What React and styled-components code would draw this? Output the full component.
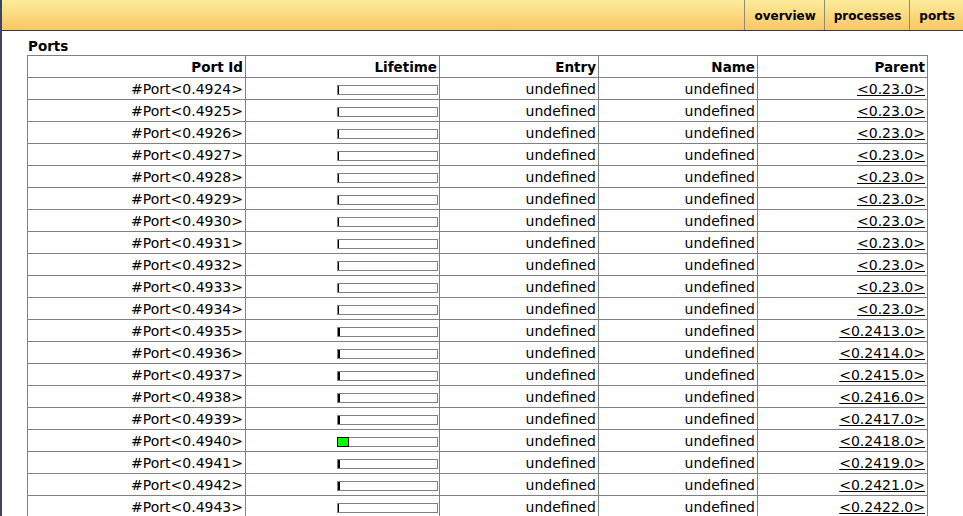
import React from "react";
import styled, { createGlobalStyle } from "styled-components";

const GlobalStyle = createGlobalStyle`
  html, body {
    margin: 0;
    padding: 0;
    overflow: hidden;
    background: #fff;
  }
  body {
    font-family: "DejaVu Sans", Verdana, sans-serif;
    color: #000;
  }
`;

const Page = styled.div`
  min-height: 100vh;
  border-left: 2px solid #3c4566;
  box-sizing: border-box;
`;

const TopBar = styled.div`
  display: flex;
  justify-content: flex-end;
  height: 30px;
  background: linear-gradient(to bottom, #fdeb9c, #f9c862);
  border-bottom: 1px solid #3a3a3a;
`;

const Tab = styled.a`
  display: flex;
  align-items: center;
  padding: 1px 8px 0 9px;
  border-left: 1px solid #8d8a7c;
  font-size: 12px;
  font-weight: bold;
  color: #000;
  text-decoration: none;
`;

const Content = styled.div`
  padding: 7px 0 0 25px;
`;

const Title = styled.h2`
  margin: 0 0 1px 1px;
  font-size: 13.5px;
  font-weight: bold;
  line-height: 16px;
`;

const Table = styled.table`
  border-collapse: collapse;
  width: 900px;
  table-layout: fixed;
`;

const Th = styled.th`
  border: 1px solid #808080;
  text-align: right;
  font-size: 13.5px;
  font-weight: bold;
  height: 22px;
  padding: 0 2px;
  width: ${(p) => p.$w}px;
  box-sizing: border-box;
`;

const Td = styled.td`
  border: 1px solid #808080;
  text-align: right;
  font-size: 14px;
  height: 22px;
  padding: 0 2px;
  white-space: nowrap;
  box-sizing: border-box;
`;

const BarCell = styled(Td)`
  padding: 0 1px 0 0;
`;

const Track = styled.div`
  display: inline-flex;
  vertical-align: middle;
  width: 99px;
  height: 8px;
  border: 1px solid #808080;
  background: #fff;
`;

const Fill = styled.div`
  height: 100%;
  background: ${(p) => (p.$green ? "#00ff00" : "#000")};
  box-shadow: ${(p) => (p.$green ? "0 0 0 1px #000" : "none")};
`;

const ParentLink = styled.a`
  color: #000;
  text-decoration: underline;
`;

const parents = {
  4935: "0.2413.0",
  4936: "0.2414.0",
  4937: "0.2415.0",
  4938: "0.2416.0",
  4939: "0.2417.0",
  4940: "0.2418.0",
  4941: "0.2419.0",
  4942: "0.2421.0",
  4943: "0.2422.0",
};

const rows = [];
for (let n = 4924; n <= 4943; n++) {
  let fill = n <= 4934 ? 1 : 2;
  if (n === 4943) fill = 1;
  rows.push({
    id: `#Port<0.${n}>`,
    fill: n === 4940 ? 10 : fill,
    green: n === 4940,
    parent: `<${parents[n] || "0.23.0"}>`,
  });
}

export default function App() {
  return (
    <Page>
      <GlobalStyle />
      <TopBar>
        <Tab href="#">overview</Tab>
        <Tab href="#">processes</Tab>
        <Tab href="#">ports</Tab>
      </TopBar>
      <Content>
        <Title>Ports</Title>
        <Table>
          <thead>
            <tr>
              <Th $w={218}>Port Id</Th>
              <Th $w={194}>Lifetime</Th>
              <Th $w={159}>Entry</Th>
              <Th $w={159}>Name</Th>
              <Th $w={170}>Parent</Th>
            </tr>
          </thead>
          <tbody>
            {rows.map((r) => (
              <tr key={r.id}>
                <Td>{r.id}</Td>
                <BarCell>
                  <Track>
                    <Fill $green={r.green} style={{ width: r.fill }} />
                  </Track>
                </BarCell>
                <Td>undefined</Td>
                <Td>undefined</Td>
                <Td>
                  <ParentLink href="#">{r.parent}</ParentLink>
                </Td>
              </tr>
            ))}
          </tbody>
        </Table>
      </Content>
    </Page>
  );
}
